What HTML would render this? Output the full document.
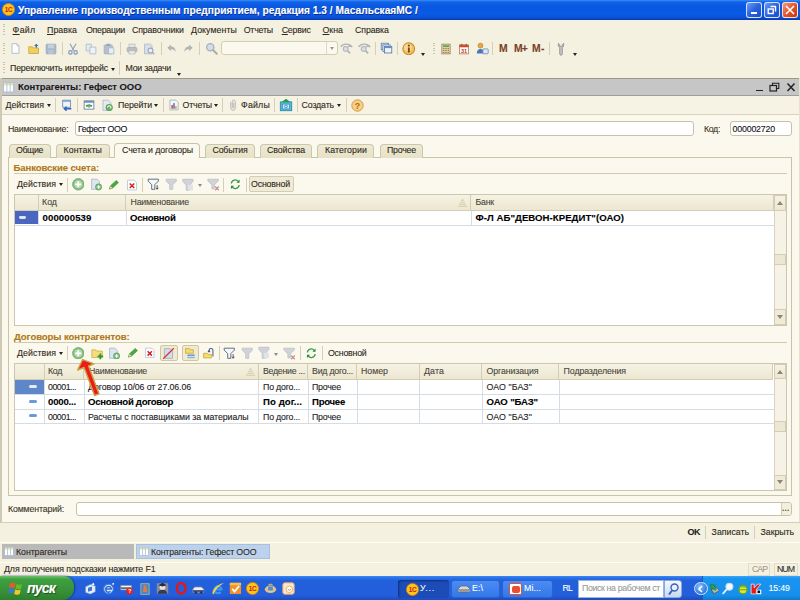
<!DOCTYPE html>
<html lang="ru">
<head>
<meta charset="utf-8">
<title>Контрагенты: Гефест ООО</title>
<style>
*{box-sizing:border-box;margin:0;padding:0}
html,body{width:800px;height:600px;overflow:hidden}
body{position:relative;background:#f5f1e0;font-family:"Liberation Sans",sans-serif;font-size:9px;color:#222}
.a,.t,svg{position:absolute}
.t{white-space:pre;-webkit-text-stroke:0.1px currentColor}
.t u{text-decoration-thickness:0.7px;text-underline-offset:1px}
.sep{position:absolute;width:1px;background:#d4cfb8}
.grip{position:absolute;width:2px;background:repeating-linear-gradient(#c8c3ac 0 1px,transparent 1px 2.4px)}
.inp{position:absolute;background:#fff;border:1px solid #c6c1a8;border-radius:3px}
.tab{position:absolute;top:143.5px;height:14px;background:linear-gradient(#eeead4,#e6e1c6);border:1px solid #cbc6ac;border-bottom:none;border-radius:4px 4px 0 0}
.hd{position:absolute;background:linear-gradient(#f6f3e4,#ece7d0);border-right:1px solid #d2cdb4;border-bottom:1px solid #d2cdb4}
.vl{position:absolute;width:1px;background:#d4dce6}
.hl{position:absolute;height:1px;background:#d4dce6}
.dd{position:absolute;width:0;height:0;border-left:2.7px solid transparent;border-right:2.7px solid transparent;border-top:3.1px solid #1a1a1a}
</style>
</head>
<body>
<div class="a" style="left:0.0px;top:0.0px;width:800.0px;height:19.5px;background:linear-gradient(#3a8cf8 0,#0f63e8 10%,#0a58e0 30%,#0a5ae6 70%,#0a50d6 88%,#0838b0 100%)"></div>
<svg style="left:2.0px;top:2.5px" width="13.0" height="13.0" viewBox="0 0 16 16"><circle cx="8" cy="8" r="7.500" fill="#f8c818" stroke="#e87810" stroke-width="1"/><text x="8" y="11" font-size="8" font-weight="bold" font-family="Liberation Sans,sans-serif" text-anchor="middle" fill="#d01818" letter-spacing="-0.5">1С</text></svg>
<div class="a" style="left:746.0px;top:2.0px;width:16.0px;height:15.5px;border:1px solid rgba(255,255,255,.8);border-radius:3px;background:linear-gradient(135deg,#6a9cf8,#2a62e0 50%,#1c4ec8)"></div>
<div class="a" style="left:764.0px;top:2.0px;width:16.0px;height:15.5px;border:1px solid rgba(255,255,255,.8);border-radius:3px;background:linear-gradient(135deg,#6a9cf8,#2a62e0 50%,#1c4ec8)"></div>
<div class="a" style="left:782.0px;top:2.0px;width:16.0px;height:15.5px;border:1px solid rgba(255,255,255,.8);border-radius:3px;background:linear-gradient(135deg,#f09a80,#e0562e 50%,#c03a14)"></div>
<div class="a" style="left:750.5px;top:11.5px;width:6.0px;height:2.5px;background:#fff"></div>
<svg style="left:767.0px;top:5.0px" width="10.0" height="10.0" viewBox="0 0 10 10"><path d="M3.500 1.500h5v5" fill="none" stroke="#fff" stroke-width="1.400"/><rect x="1.200" y="4" width="5" height="4.500" fill="none" stroke="#fff" stroke-width="1.400"/></svg>
<svg style="left:785.0px;top:4.5px" width="10.0" height="10.0" viewBox="0 0 10 10"><path d="M1 1l8 8M9 1l-8 8" stroke="#fff" stroke-width="1.600"/></svg>
<div class="a" style="left:0.0px;top:19.5px;width:800.0px;height:59.0px;background:#f5f1e0"></div>
<div class="grip" style="left:3px;top:24px;height:11px"></div>
<div class="grip" style="left:3px;top:43px;height:12px"></div>
<div class="grip" style="left:3px;top:62px;height:12px"></div>
<svg style="left:10.0px;top:43.0px" width="11.0" height="11.0" viewBox="0 0 16 16"><path d="M3 1h7l3 3v11H3z" fill="#fff" stroke="#9aa8bc" stroke-width="1"/><path d="M10 1v3h3" fill="#dfe6f0" stroke="#9aa8bc" stroke-width=".8"/></svg>
<svg style="left:28.0px;top:42.5px" width="12.0" height="12.0" viewBox="0 0 16 16"><path d="M1 5h5l1 1.5h7V14H1z" fill="#f2d060" stroke="#c8a030" stroke-width="1"/><path d="M11 1l3 3h-2v2h-2V4H8z" fill="#3a6ab0"/></svg>
<svg style="left:45.0px;top:42.5px" width="12.0" height="12.0" viewBox="0 0 16 16"><rect x="1.5" y="1.5" width="13" height="13" rx="1" fill="#a9b7c9" stroke="#98a8bc"/><rect x="4" y="2" width="8" height="5" fill="#c6d0dc"/><rect x="4.5" y="9.5" width="7" height="5" fill="#b9c5d3"/></svg>
<svg style="left:67.0px;top:42.5px" width="12.0" height="12.0" viewBox="0 0 16 16"><path d="M4 1l5 9M12 1L7 10" stroke="#8fa4c0" stroke-width="1.6" fill="none"/><circle cx="4.5" cy="12.5" r="2.3" fill="none" stroke="#7f97b8" stroke-width="1.5"/><circle cx="11.5" cy="12.5" r="2.3" fill="none" stroke="#7f97b8" stroke-width="1.5"/></svg>
<svg style="left:85.0px;top:42.5px" width="12.0" height="12.0" viewBox="0 0 16 16"><path d="M1.5 1.5h7v9h-7z" fill="#e4eaf2" stroke="#a4b4c8"/><path d="M6.500 5.500h8v9h-8z" fill="#eef2f7" stroke="#a4b4c8"/></svg>
<svg style="left:103.0px;top:42.5px" width="12.0" height="12.0" viewBox="0 0 16 16"><rect x="1.500" y="2.500" width="11" height="12" rx="1" fill="#b4c0d0" stroke="#a0aec2"/><rect x="4.500" y="1" width="5" height="3" fill="#98a8bc"/><rect x="7.500" y="6.500" width="7" height="8" fill="#e8edf4" stroke="#a4b4c8"/></svg>
<svg style="left:126.0px;top:42.5px" width="12.0" height="12.0" viewBox="0 0 16 16"><rect x="4" y="1.500" width="8" height="5" fill="#e6e6e6" stroke="#b8b8b8"/><rect x="1.500" y="6" width="13" height="6" rx="1.500" fill="#bcbcbc" stroke="#ababab"/><rect x="4" y="10.500" width="8" height="4" fill="#eee" stroke="#b8b8b8"/></svg>
<svg style="left:143.0px;top:42.5px" width="12.0" height="12.0" viewBox="0 0 16 16"><path d="M2 1.500h8l2 2v11H2z" fill="#d9dfe8" stroke="#aab4c4"/><circle cx="10" cy="10" r="3.200" fill="#e8eef6" stroke="#9aa8bc" stroke-width="1.400"/><path d="M12.300 12.300l2.700 2.700" stroke="#9aa8bc" stroke-width="1.800"/></svg>
<svg style="left:166.0px;top:43.0px" width="11.0" height="11.0" viewBox="0 0 16 16"><path d="M2 7l5-5v3c4 0 7 2 7 8-1.500-3-3.500-4-7-4v3z" fill="#b4b4b4"/></svg>
<svg style="left:183.0px;top:43.0px" width="11.0" height="11.0" viewBox="0 0 16 16"><path d="M14 7L9 2v3C5 5 2 7 2 13c1.500-3 3.500-4 7-4v3z" fill="#b4b4b4"/></svg>
<svg style="left:205.0px;top:42.0px" width="13.0" height="13.0" viewBox="0 0 16 16"><circle cx="6.500" cy="6.500" r="4.500" fill="#d4dce8" stroke="#a4b0c4" stroke-width="1.600"/><path d="M10 10l4.500 4.500" stroke="#b0a8a0" stroke-width="2.400" stroke-linecap="round"/></svg>
<svg style="left:340.0px;top:42.0px" width="13.0" height="13.0" viewBox="0 0 16 16"><path d="M1 6c2-4 10-5 14 0-3-1.500-4-1.500-5 0" fill="none" stroke="#b2b2b2" stroke-width="1.800"/><circle cx="7" cy="8.500" r="3" fill="#d8dde6" stroke="#b0b4bc" stroke-width="1.300"/><path d="M9.500 11l3 3" stroke="#b0b0b0" stroke-width="2"/></svg>
<svg style="left:358.0px;top:42.0px" width="13.0" height="13.0" viewBox="0 0 16 16"><path d="M1 6c2-4 10-5 14 0-3-1.500-4-1.500-5 0" fill="none" stroke="#b2b2b2" stroke-width="1.800"/><circle cx="7" cy="8.500" r="3" fill="#d8dde6" stroke="#b0b4bc" stroke-width="1.300"/><path d="M9.500 11l3 3" stroke="#b0b0b0" stroke-width="2"/></svg>
<svg style="left:380.0px;top:42.0px" width="13.0" height="13.0" viewBox="0 0 16 16"><rect x="1.500" y="1.500" width="9" height="8" fill="#dfe8f4" stroke="#5f7fae"/><rect x="3.500" y="3.500" width="9" height="8" fill="#dfe8f4" stroke="#5f7fae"/><rect x="5.500" y="5.500" width="9" height="8" fill="#eef3fa" stroke="#4f73a8"/><rect x="5.500" y="5.500" width="9" height="2" fill="#6f8fc0"/></svg>
<svg style="left:402.0px;top:41.8px" width="13.5" height="13.5" viewBox="0 0 16 16"><circle cx="8" cy="8" r="7" fill="#f4c060" stroke="#c88a28" stroke-width="1.200"/><circle cx="7" cy="6.500" r="4.500" fill="#fbe2a8" opacity=".7"/><rect x="7" y="6.500" width="2.200" height="6" fill="#7a4a10"/><circle cx="8.100" cy="4.200" r="1.300" fill="#7a4a10"/></svg>
<svg style="left:440.0px;top:42.5px" width="12.0" height="12.0" viewBox="0 0 16 16"><rect x="2.500" y="1.500" width="11" height="13" fill="#e8dcb8" stroke="#8a7a50"/><rect x="4" y="3" width="8" height="2.500" fill="#6aa04a"/><path d="M4 7.500h8M4 10h8M4 12.500h8" stroke="#a08848" stroke-width="1.500" stroke-dasharray="2 1"/></svg>
<svg style="left:458.0px;top:42.5px" width="12.0" height="12.0" viewBox="0 0 16 16"><rect x="2" y="2.500" width="12" height="12" fill="#fff" stroke="#b07050"/><rect x="2" y="2.500" width="12" height="3.200" fill="#d84828"/><path d="M5 1v3M11 1v3" stroke="#806050" stroke-width="1.300"/><text x="8" y="13.300" font-size="7.500" font-weight="bold" font-family="Liberation Sans,sans-serif" text-anchor="middle" fill="#c03818">31</text></svg>
<svg style="left:476.0px;top:42.0px" width="13.0" height="13.0" viewBox="0 0 16 16"><circle cx="5.500" cy="4.500" r="3" fill="#e8a848" stroke="#b87828" stroke-width=".8"/><path d="M1 14c0-4 2-5.500 4.500-5.500S10 10 10 14z" fill="#4878b8"/><rect x="8.500" y="8.500" width="6.500" height="6" rx="1" fill="#dfe8f4" stroke="#6888b8"/></svg>
<svg style="left:554.0px;top:41.5px" width="14.0" height="14.0" viewBox="0 0 16 16"><path d="M5 1.500v3.500l1.500 1.500v7a1.500 1.500 0 003 0v-7L11 5V1.500L9.500 3v2h-3V3z" fill="#c4c4c4" stroke="#8c8c8c" stroke-width=".9"/></svg>
<div class="sep" style="left:62.0px;top:42.0px;height:13.0px;background:#d4cfb8"></div>
<div class="sep" style="left:120.0px;top:42.0px;height:13.0px;background:#d4cfb8"></div>
<div class="sep" style="left:161.0px;top:42.0px;height:13.0px;background:#d4cfb8"></div>
<div class="sep" style="left:199.0px;top:42.0px;height:13.0px;background:#d4cfb8"></div>
<div class="sep" style="left:375.0px;top:42.0px;height:13.0px;background:#d4cfb8"></div>
<div class="sep" style="left:397.0px;top:42.0px;height:13.0px;background:#d4cfb8"></div>
<div class="sep" style="left:492.0px;top:42.0px;height:13.0px;background:#d4cfb8"></div>
<div class="sep" style="left:549.0px;top:42.0px;height:13.0px;background:#d4cfb8"></div>
<div class="grip" style="left:432.5px;top:43px;height:12px"></div>
<div class="a" style="left:220.5px;top:40.8px;width:117.5px;height:14.4px;background:#fbf9ee;border:1px solid #d2cdb6;border-radius:3px"></div>
<div class="sep" style="left:326.0px;top:42.0px;height:12.0px;background:#ddd8c4"></div>
<div class="dd" style="left:329.5px;top:47.0px;border-top-color:#9a968a"></div>
<div class="dd" style="left:420.5px;top:52.5px;border-top-color:#222"></div>
<div class="dd" style="left:572.5px;top:52.5px;border-top-color:#222"></div>
<div class="dd" style="left:111.0px;top:67.5px;border-top-color:#222"></div>
<div class="sep" style="left:119.0px;top:61.0px;height:14.0px;background:#d4cfb8"></div>
<div class="dd" style="left:177.3px;top:72.5px;border-top-color:#222"></div>
<div class="a" style="left:0.0px;top:78.3px;width:798.5px;height:17.7px;background:#c6c6c6;border-top:1.5px solid #9c9886;border-bottom:1.2px solid #9e9e9a"></div>
<svg style="left:3.0px;top:81.5px" width="11.0" height="11.0" viewBox="0 0 16 16"><rect x="1" y="1.500" width="14" height="13" fill="#fff" stroke="#a4b4d0"/><rect x="1.500" y="2" width="13" height="3" fill="#e4e8a4"/><path d="M5.700 1.500v13M10.300 1.500v13" stroke="#a4b8d8" stroke-width="1.200"/></svg>
<div class="a" style="left:756.0px;top:89.5px;width:7.0px;height:1.7px;background:#222"></div>
<svg style="left:769.0px;top:82.0px" width="11.0" height="10.0" viewBox="0 0 11 10"><path d="M3.500 3V1.200h6.300v5.300H8" fill="none" stroke="#222" stroke-width="1.100"/><rect x="1" y="3.500" width="6.500" height="5.500" fill="none" stroke="#222" stroke-width="1.200"/></svg>
<svg style="left:786.0px;top:82.0px" width="10.0" height="10.0" viewBox="0 0 10 10"><path d="M1.500 1.500l7 7.500M8.500 1.500l-7 7.500" stroke="#222" stroke-width="1.500"/></svg>
<div class="a" style="left:0.0px;top:96.0px;width:800.0px;height:18.5px;background:#f6f3e4;border-bottom:1px solid #d8d3bc"></div>
<div class="a" style="left:0.0px;top:114.5px;width:800.0px;height:407.5px;background:#fbf9ed"></div>
<div class="dd" style="left:46.5px;top:103.5px;border-top-color:#222"></div>
<div class="sep" style="left:55.0px;top:98.0px;height:14.0px;background:#d4cfb8"></div>
<svg style="left:60.0px;top:98.5px" width="12.5" height="12.5" viewBox="0 0 16 16"><rect x="3.500" y="1.500" width="10" height="9" fill="#eef3fa" stroke="#5f7fae"/><rect x="3.500" y="1.500" width="10" height="2" fill="#7f9fd0"/><path d="M14.500 12.500H6M8.500 10l-3 2.500 3 2.500" stroke="#2f68b8" stroke-width="1.800" fill="none"/></svg>
<div class="sep" style="left:76.5px;top:98.0px;height:14.0px;background:#d4cfb8"></div>
<svg style="left:82.5px;top:99.0px" width="12.0" height="12.0" viewBox="0 0 16 16"><rect x="1.500" y="2.500" width="13" height="11" fill="#fff" stroke="#4f6f9e"/><rect x="1.500" y="2.500" width="13" height="2.500" fill="#6f8fc0"/><path d="M4 9h8M8 6.500v5" stroke="#4a9a4a" stroke-width="1.600"/><path d="M3.500 9l2.500-2v4zM12.500 9L10 7v4z" fill="#3a8a3a"/></svg>
<svg style="left:100.5px;top:98.5px" width="12.5" height="12.5" viewBox="0 0 16 16"><path d="M2.500 1.500h7l3 3v10h-10z" fill="#e4eaf2" stroke="#a4b4c8"/><circle cx="10.500" cy="11" r="4.200" fill="#6ab06a" stroke="#4a904a" stroke-width=".8"/><path d="M8.300 11a2.200 2.200 0 114 1.200" stroke="#fff" stroke-width="1.300" fill="none"/></svg>
<div class="dd" style="left:154.0px;top:103.5px;border-top-color:#222"></div>
<div class="sep" style="left:163.0px;top:98.0px;height:14.0px;background:#d4cfb8"></div>
<svg style="left:168.0px;top:98.5px" width="12.0" height="12.0" viewBox="0 0 16 16"><path d="M2.500 1.500h8l3 3v10h-11z" fill="#f4f6fa" stroke="#9aa8bc"/><rect x="4.500" y="8" width="2" height="5" fill="#d84828"/><rect x="7" y="5.500" width="2" height="7.500" fill="#4878c8"/><rect x="9.500" y="9.500" width="2" height="3.500" fill="#e8a020"/></svg>
<div class="dd" style="left:214.0px;top:103.5px;border-top-color:#222"></div>
<div class="sep" style="left:222.0px;top:98.0px;height:14.0px;background:#d4cfb8"></div>
<svg style="left:226.5px;top:98.5px" width="12.0" height="12.0" viewBox="0 0 16 16"><path d="M5 4v8a3 3 0 006 0V3.500a2 2 0 00-4 0V11a1 1 0 002 0V5" fill="none" stroke="#b4b4b4" stroke-width="1.300"/></svg>
<div class="sep" style="left:274.0px;top:98.0px;height:14.0px;background:#d4cfb8"></div>
<svg style="left:279.0px;top:98.0px" width="14.0" height="14.0" viewBox="0 0 16 16"><rect x="1.500" y="4.500" width="13" height="10" fill="#58b8d8" stroke="#2888b0"/><path d="M3 4.500L8 .8l5 3.700z" fill="#2a9a4a"/><rect x="4" y="7" width="8" height="5.500" fill="#c8ecf8" stroke="#2888b0" stroke-width=".7"/><circle cx="8" cy="9.700" r="1.600" fill="none" stroke="#2888b0" stroke-width=".9"/></svg>
<div class="sep" style="left:296.5px;top:98.0px;height:14.0px;background:#d4cfb8"></div>
<div class="dd" style="left:337.0px;top:103.5px;border-top-color:#222"></div>
<div class="sep" style="left:345.5px;top:98.0px;height:14.0px;background:#d4cfb8"></div>
<svg style="left:350.5px;top:98.5px" width="13.0" height="13.0" viewBox="0 0 16 16"><circle cx="8" cy="8" r="7" fill="#f6d088" stroke="#d89838" stroke-width="1.200"/><text x="8" y="12" font-size="11" font-weight="bold" font-family="Liberation Sans,sans-serif" text-anchor="middle" fill="#b86818">?</text></svg>
<div class="a" style="left:0.0px;top:78.3px;width:2.0px;height:463.2px;background:#cdc9b4"></div>
<div class="a" style="left:798.5px;top:78.3px;width:1.5px;height:463.2px;background:#e6e2ce"></div>
<div class="inp" style="left:75.0px;top:121.0px;width:619.0px;height:14.8px;"></div>
<div class="inp" style="left:729.5px;top:121.0px;width:62.5px;height:14.8px;"></div>
<div class="a" style="left:7.5px;top:157.0px;width:784.5px;height:339.0px;border:1px solid #c9c4a8;background:#fbf9ed"></div>
<div class="tab" style="left:8.5px;top:143.5px;width:42.5px;height:14.0px;"></div>
<div class="tab" style="left:55.5px;top:143.5px;width:54.5px;height:14.0px;"></div>
<div class="tab" style="left:204.5px;top:143.5px;width:50.5px;height:14.0px;"></div>
<div class="tab" style="left:260.0px;top:143.5px;width:52.0px;height:14.0px;"></div>
<div class="tab" style="left:317.0px;top:143.5px;width:57.0px;height:14.0px;"></div>
<div class="tab" style="left:379.5px;top:143.5px;width:43.5px;height:14.0px;"></div>
<div class="a" style="left:113.5px;top:142.5px;width:86.0px;height:15.7px;background:#fbf9ed;border:1px solid #c9c4a8;border-bottom:none;border-radius:4px 4px 0 0"></div>
<div class="a" style="left:13.5px;top:173.2px;width:773.5px;height:1.0px;background:#cfcab0"></div>
<div class="dd" style="left:58.5px;top:183.0px;border-top-color:#222"></div>
<div class="sep" style="left:67.0px;top:177.5px;height:14.0px;background:#d4cfb8"></div>
<svg style="left:71.7px;top:178.2px" width="12.6" height="12.6" viewBox="0 0 16 16"><circle cx="8" cy="8" r="7.300" fill="#84bc84" stroke="#6aa86a" stroke-width="1"/><circle cx="8" cy="8" r="5" fill="#b4d8ac"/><path d="M8 4.200v7.600M4.200 8h7.600" stroke="#fff" stroke-width="2.200"/></svg>
<svg style="left:90.0px;top:178.2px" width="12.5" height="12.5" viewBox="0 0 16 16"><path d="M2 1.500h7l3 3v10H2z" fill="#dde5ef" stroke="#a4b4c8"/><circle cx="11" cy="11.500" r="4" fill="#7ab87a" stroke="#5a9c5a" stroke-width=".8"/><path d="M11 9.200v4.600M8.700 11.500h4.600" stroke="#fff" stroke-width="1.500"/></svg>
<svg style="left:108.0px;top:178.8px" width="11.5" height="11.5" viewBox="0 0 16 16"><path d="M2 14l1.500-4.500 8-7.500 3 3-8 7.500z" fill="#4aaa3a" stroke="#2a8a2a" stroke-width=".8"/><path d="M2 14l1.500-4.500 3 3z" fill="#f4e4b0" stroke="#8a8a5a" stroke-width=".5"/></svg>
<svg style="left:126.0px;top:178.5px" width="12.0" height="12.0" viewBox="0 0 16 16"><path d="M2 1.500h9l3 3v10H2z" fill="#fff" stroke="#a8c0dc"/><path d="M5 6l6 6M11 6l-6 6" stroke="#d82020" stroke-width="2"/></svg>
<svg style="left:147.0px;top:178.2px" width="12.5" height="12.5" viewBox="0 0 16 16"><path d="M1.500 1.500h13v2.500l-4.500 4.500v6h-4v-6L1.500 4z" fill="#f4f8fc" stroke="#4a5a6a" stroke-width="1.100"/><path d="M13 9v5M11.500 12.500l1.500 2 1.500-2" stroke="#333" stroke-width="1" fill="none"/></svg>
<svg style="left:165.0px;top:178.2px" width="12.5" height="12.5" viewBox="0 0 16 16"><path d="M1.500 1.500h13v2.500l-4.500 4.500v6h-4v-6L1.500 4z" fill="#d0d4d8" stroke="#bcc0c6" stroke-width="1"/></svg>
<svg style="left:182.0px;top:177.8px" width="13.5" height="13.5" viewBox="0 0 16 16"><path d="M1 1.500h12v2.500l-4 4.500v6h-4v-6L1 4z" fill="#d0d4d8" stroke="#bcc0c6" stroke-width="1"/><rect x="7" y="8" width="6" height="6.500" fill="#dfe2e6"/></svg>
<svg style="left:207.0px;top:178.0px" width="13.0" height="13.0" viewBox="0 0 16 16"><path d="M1 1.500h13v2l-5 5v5h-3v-5l-5-5z" fill="#d0d4d8" stroke="#bcc0c6" stroke-width="1"/><path d="M10 10.500l4.500 4.500M14.500 10.500L10 15" stroke="#c89090" stroke-width="1.600"/></svg>
<svg style="left:229.0px;top:178.2px" width="12.5" height="12.5" viewBox="0 0 16 16"><path d="M3 7a5 5 0 019-2.500" fill="none" stroke="#3a9a4a" stroke-width="1.600"/><path d="M13.500 2v4H9.500z" fill="#2a8a3a"/><path d="M13 9a5 5 0 01-9 2.500" fill="none" stroke="#3a9a4a" stroke-width="1.600"/><path d="M2.500 14V10h4z" fill="#2a8a3a"/></svg>
<div class="dd" style="left:197.5px;top:184.0px;border-top-color:#8a8a8a"></div>
<div class="sep" style="left:142.0px;top:177.5px;height:14.0px;background:#d4cfb8"></div>
<div class="sep" style="left:223.0px;top:177.5px;height:14.0px;background:#d4cfb8"></div>
<div class="sep" style="left:246.0px;top:177.5px;height:14.0px;background:#d4cfb8"></div>
<div class="a" style="left:248.5px;top:176.2px;width:45.0px;height:16.1px;background:#efebd6;border:1px solid #d2cdb4;border-radius:2px"></div>
<div class="a" style="left:13.5px;top:194.0px;width:773.5px;height:131.5px;background:#fff;border:1px solid #cbc6ae"></div>
<div class="hd" style="left:14.5px;top:195.0px;width:24.0px;height:16.0px;"></div>
<div class="hd" style="left:38.5px;top:195.0px;width:87.5px;height:16.0px;"></div>
<div class="hd" style="left:126.0px;top:195.0px;width:345.0px;height:16.0px;"></div>
<div class="hd" style="left:471.0px;top:195.0px;width:302.5px;height:16.0px;"></div>
<svg style="left:456.5px;top:197.0px" width="11.0" height="11.0" viewBox="0 0 16 16"><path d="M8 2.500l2.200 2.800H5.800z" fill="#cfc8a8"/><path d="M4.500 7.700h7" stroke="#cfc8a8" stroke-width="1.300"/><path d="M3 10.600h10" stroke="#cfc8a8" stroke-width="1.300"/><path d="M1.500 13.500h13" stroke="#cfc8a8" stroke-width="1.300"/></svg>
<div class="a" style="left:14.5px;top:211.0px;width:24.0px;height:13.2px;background:#4a66c0"></div>
<div class="a" style="left:19.3px;top:216.3px;width:6.7px;height:2.9px;background:#dfe6f8;border-radius:1.4px"></div>
<div class="hl" style="left:14.5px;top:224.5px;width:759.0px;height:1.0px;"></div>
<div class="vl" style="left:38.0px;top:211.0px;width:1.0px;height:13.5px;"></div>
<div class="vl" style="left:125.5px;top:211.0px;width:1.0px;height:13.5px;"></div>
<div class="vl" style="left:470.5px;top:211.0px;width:1.0px;height:13.5px;"></div>
<div class="a" style="left:773.5px;top:195.0px;width:12.5px;height:129.5px;background:#f6f3e6;border-left:1px solid #d8d3bc"></div><div class="a" style="left:773.5px;top:195.0px;width:12.5px;height:15.5px;background:linear-gradient(#f6f3e4,#ece7d0);border:1px solid #d2cdb4"></div><div class="a" style="left:773.5px;top:309.0px;width:12.5px;height:15.5px;background:#efebd8;border:1px solid #d2cdb4"></div><div class="a" style="left:773.5px;top:254.2px;width:12.5px;height:11.0px;background:#ece7d2;border:1px solid #d2cdb4"></div><div class="dd" style="left:776.8px;top:201.0px;border-top:none;border-bottom:4px solid #8a8678;border-left-width:3px;border-right-width:3px"></div><div class="dd" style="left:776.8px;top:314.5px;border-top:4px solid #8a8678;border-left-width:3px;border-right-width:3px"></div>
<div class="a" style="left:13.5px;top:342.0px;width:773.5px;height:1.0px;background:#cfcab0"></div>
<div class="dd" style="left:58.5px;top:351.8px;border-top-color:#222"></div>
<div class="sep" style="left:67.0px;top:346.0px;height:14.0px;background:#d4cfb8"></div>
<div class="a" style="left:159.5px;top:344.5px;width:18.0px;height:16.5px;background:#f2ead0;border:1px solid #cfc6a4;border-radius:2px"></div>
<div class="a" style="left:181.5px;top:344.5px;width:17.0px;height:16.5px;background:#f2ead0;border:1px solid #cfc6a4;border-radius:2px"></div>
<svg style="left:71.7px;top:346.9px" width="12.6" height="12.6" viewBox="0 0 16 16"><circle cx="8" cy="8" r="7.300" fill="#84bc84" stroke="#6aa86a" stroke-width="1"/><circle cx="8" cy="8" r="5" fill="#b4d8ac"/><path d="M8 4.200v7.600M4.200 8h7.600" stroke="#fff" stroke-width="2.200"/></svg>
<svg style="left:90.5px;top:346.7px" width="13.0" height="13.0" viewBox="0 0 16 16"><path d="M1 3.500h5l1 1.500h7V13H1z" fill="#f4dc80" stroke="#d0b048" stroke-width="1"/><path d="M11.500 8v7M8 11.500h7" stroke="#2a9a2a" stroke-width="2.200"/></svg>
<svg style="left:108.0px;top:346.9px" width="12.5" height="12.5" viewBox="0 0 16 16"><path d="M2 1.500h7l3 3v10H2z" fill="#dde5ef" stroke="#a4b4c8"/><circle cx="11" cy="11.500" r="4" fill="#7ab87a" stroke="#5a9c5a" stroke-width=".8"/><path d="M11 9.200v4.600M8.700 11.500h4.600" stroke="#fff" stroke-width="1.500"/></svg>
<svg style="left:126.5px;top:347.4px" width="11.5" height="11.5" viewBox="0 0 16 16"><path d="M2 14l1.500-4.500 8-7.500 3 3-8 7.500z" fill="#4aaa3a" stroke="#2a8a2a" stroke-width=".8"/><path d="M2 14l1.500-4.500 3 3z" fill="#f4e4b0" stroke="#8a8a5a" stroke-width=".5"/></svg>
<svg style="left:143.5px;top:347.4px" width="11.5" height="11.5" viewBox="0 0 16 16"><path d="M2 1.500h9l3 3v10H2z" fill="#fff" stroke="#a8c0dc"/><path d="M5 6l6 6M11 6l-6 6" stroke="#d82020" stroke-width="2"/></svg>
<svg style="left:162.0px;top:346.7px" width="13.0" height="13.0" viewBox="0 0 16 16"><path d="M3 2h7l3 3v9H3z" fill="#d4dcec" stroke="#9aaac8"/><path d="M1.500 14.500l13-13" stroke="#d83030" stroke-width="1.500"/></svg>
<svg style="left:184.0px;top:346.9px" width="12.5" height="12.5" viewBox="0 0 16 16"><path d="M2 2h5l1 1.500h4V8H2z" fill="#f4dc70" stroke="#c8a838"/><rect x="4" y="9.500" width="10" height="2" rx="1" fill="#6a9ad8"/><rect x="4" y="12.500" width="10" height="2" rx="1" fill="#8ab4e8"/></svg>
<svg style="left:202.0px;top:346.9px" width="12.5" height="12.5" viewBox="0 0 16 16"><path d="M2 8h5l1 1.500h4V14H2z" fill="#f4dc70" stroke="#c8a838"/><path d="M9 7V4.500a2.500 2.500 0 015 0V12" fill="none" stroke="#4a5a7a" stroke-width="1.300"/><path d="M7 6.500l2-3 2 3z" fill="#4a5a7a"/></svg>
<svg style="left:223.0px;top:346.9px" width="12.5" height="12.5" viewBox="0 0 16 16"><path d="M1.500 1.500h13v2.500l-4.500 4.500v6h-4v-6L1.500 4z" fill="#f4f8fc" stroke="#4a5a6a" stroke-width="1.100"/><path d="M13 9v5M11.500 12.500l1.500 2 1.500-2" stroke="#333" stroke-width="1" fill="none"/></svg>
<svg style="left:241.0px;top:346.9px" width="12.5" height="12.5" viewBox="0 0 16 16"><path d="M1.500 1.500h13v2.500l-4.500 4.500v6h-4v-6L1.500 4z" fill="#d0d4d8" stroke="#bcc0c6" stroke-width="1"/></svg>
<svg style="left:258.0px;top:346.4px" width="13.5" height="13.5" viewBox="0 0 16 16"><path d="M1 1.500h12v2.500l-4 4.500v6h-4v-6L1 4z" fill="#d0d4d8" stroke="#bcc0c6" stroke-width="1"/><rect x="7" y="8" width="6" height="6.500" fill="#dfe2e6"/></svg>
<svg style="left:283.0px;top:346.7px" width="13.0" height="13.0" viewBox="0 0 16 16"><path d="M1 1.500h13v2l-5 5v5h-3v-5l-5-5z" fill="#d0d4d8" stroke="#bcc0c6" stroke-width="1"/><path d="M10 10.500l4.500 4.500M14.500 10.500L10 15" stroke="#c89090" stroke-width="1.600"/></svg>
<svg style="left:305.0px;top:346.9px" width="12.5" height="12.5" viewBox="0 0 16 16"><path d="M3 7a5 5 0 019-2.500" fill="none" stroke="#3a9a4a" stroke-width="1.600"/><path d="M13.500 2v4H9.500z" fill="#2a8a3a"/><path d="M13 9a5 5 0 01-9 2.500" fill="none" stroke="#3a9a4a" stroke-width="1.600"/><path d="M2.500 14V10h4z" fill="#2a8a3a"/></svg>
<div class="dd" style="left:273.5px;top:352.5px;border-top-color:#8a8a8a"></div>
<div class="sep" style="left:219.0px;top:346.0px;height:14.0px;background:#d4cfb8"></div>
<div class="sep" style="left:300.0px;top:346.0px;height:14.0px;background:#d4cfb8"></div>
<div class="sep" style="left:322.0px;top:346.0px;height:14.0px;background:#d4cfb8"></div>
<div class="a" style="left:13.5px;top:362.5px;width:773.5px;height:128.5px;background:#fff;border:1px solid #cbc6ae"></div>
<div class="hd" style="left:14.5px;top:363.5px;width:30.0px;height:16.0px;"></div>
<div class="hd" style="left:44.5px;top:363.5px;width:39.5px;height:16.0px;"></div>
<div class="hd" style="left:84.0px;top:363.5px;width:174.6px;height:16.0px;"></div>
<div class="hd" style="left:258.6px;top:363.5px;width:49.4px;height:16.0px;"></div>
<div class="hd" style="left:308.0px;top:363.5px;width:49.0px;height:16.0px;"></div>
<div class="hd" style="left:357.0px;top:363.5px;width:62.6px;height:16.0px;"></div>
<div class="hd" style="left:419.6px;top:363.5px;width:62.8px;height:16.0px;"></div>
<div class="hd" style="left:482.4px;top:363.5px;width:77.0px;height:16.0px;"></div>
<div class="hd" style="left:559.4px;top:363.5px;width:214.1px;height:16.0px;"></div>
<svg style="left:244.5px;top:366.0px" width="11.0" height="11.0" viewBox="0 0 16 16"><path d="M8 2.500l2.200 2.800H5.800z" fill="#cfc8a8"/><path d="M4.500 7.700h7" stroke="#cfc8a8" stroke-width="1.300"/><path d="M3 10.600h10" stroke="#cfc8a8" stroke-width="1.300"/><path d="M1.500 13.500h13" stroke="#cfc8a8" stroke-width="1.300"/></svg>
<div class="a" style="left:14.5px;top:379.5px;width:30.0px;height:14.8px;background:#5f86c8"></div>
<div class="a" style="left:28.7px;top:384.8px;width:8.3px;height:3.0px;background:#e4ecfa;border-radius:1.500px"></div>
<div class="a" style="left:28.7px;top:399.7px;width:8.3px;height:3.0px;background:#6a98d8;border-radius:1.500px"></div>
<div class="a" style="left:28.7px;top:414.1px;width:8.3px;height:3.0px;background:#6a98d8;border-radius:1.500px"></div>
<div class="hl" style="left:14.5px;top:394.2px;width:759.0px;height:1.0px;"></div>
<div class="hl" style="left:14.5px;top:408.7px;width:759.0px;height:1.0px;"></div>
<div class="hl" style="left:14.5px;top:423.2px;width:759.0px;height:1.0px;"></div>
<div class="vl" style="left:44.0px;top:379.5px;width:1.0px;height:43.7px;"></div>
<div class="vl" style="left:83.5px;top:379.5px;width:1.0px;height:43.7px;"></div>
<div class="vl" style="left:258.1px;top:379.5px;width:1.0px;height:43.7px;"></div>
<div class="vl" style="left:307.5px;top:379.5px;width:1.0px;height:43.7px;"></div>
<div class="vl" style="left:356.5px;top:379.5px;width:1.0px;height:43.7px;"></div>
<div class="vl" style="left:419.1px;top:379.5px;width:1.0px;height:43.7px;"></div>
<div class="vl" style="left:481.9px;top:379.5px;width:1.0px;height:43.7px;"></div>
<div class="vl" style="left:558.9px;top:379.5px;width:1.0px;height:43.7px;"></div>
<div class="a" style="left:773.5px;top:363.5px;width:12.5px;height:126.5px;background:#f6f3e6;border-left:1px solid #d8d3bc"></div><div class="a" style="left:773.5px;top:363.5px;width:12.5px;height:15.5px;background:linear-gradient(#f6f3e4,#ece7d0);border:1px solid #d2cdb4"></div><div class="a" style="left:773.5px;top:474.5px;width:12.5px;height:15.5px;background:#efebd8;border:1px solid #d2cdb4"></div><div class="a" style="left:773.5px;top:421.2px;width:12.5px;height:11.0px;background:#ece7d2;border:1px solid #d2cdb4"></div><div class="dd" style="left:776.8px;top:369.5px;border-top:none;border-bottom:4px solid #8a8678;border-left-width:3px;border-right-width:3px"></div><div class="dd" style="left:776.8px;top:480.0px;border-top:4px solid #8a8678;border-left-width:3px;border-right-width:3px"></div>
<svg style="left:70px;top:354px;z-index:5" width="40" height="48" viewBox="70 354 40 48"><path d="M82.600 359.600L77.600 370l6.500-2.500L94.600 395.500l4.400-1.700L88.500 366l5.500-2.200z" fill="#f01818" stroke="#c8a244" stroke-width="1.400" stroke-linejoin="round"/></svg>
<div class="inp" style="left:75.5px;top:501.5px;width:716.5px;height:14.3px;"></div>
<div class="a" style="left:780.5px;top:502.5px;width:10.5px;height:12.3px;background:#f3efdc;border-left:1px solid #d2cdb4;border-radius:0 2px 2px 0"></div>
<div class="t" style="left:782px;top:505px;font-size:8px;line-height:8px;letter-spacing:0.3px;color:#555;font-weight:bold">...</div>
<div class="a" style="left:0.0px;top:521.5px;width:800.0px;height:20.5px;background:#f5f1e0;border-top:1px solid #d4cfb8"></div>
<div class="sep" style="left:705.0px;top:526.0px;height:13.0px;background:#d4cfb8"></div>
<div class="sep" style="left:754.0px;top:526.0px;height:13.0px;background:#d4cfb8"></div>
<div class="a" style="left:0.0px;top:541.5px;width:800.0px;height:20.5px;background:#f5f1e0;border-top:1px solid #fffdf4"></div>
<div class="a" style="left:2.0px;top:544.3px;width:132.0px;height:14.5px;background:#b9b9b9"></div>
<div class="a" style="left:136.0px;top:544.3px;width:134.0px;height:14.5px;background:#bcd2ec;border:1px solid #a8c0dc"></div>
<svg style="left:3.5px;top:546.0px" width="10.0" height="11.0" viewBox="0 0 16 16"><rect x="1" y="1.500" width="14" height="13" fill="#fff" stroke="#a4b4d0"/><rect x="1.500" y="2" width="13" height="3" fill="#e4e8a4"/><path d="M5.700 1.500v13M10.300 1.500v13" stroke="#a4b8d8" stroke-width="1.200"/></svg>
<svg style="left:138.5px;top:546.0px" width="10.0" height="11.0" viewBox="0 0 16 16"><rect x="1" y="1.500" width="14" height="13" fill="#fff" stroke="#a4b4d0"/><rect x="1.500" y="2" width="13" height="3" fill="#e4e8a4"/><path d="M5.700 1.500v13M10.300 1.500v13" stroke="#a4b8d8" stroke-width="1.200"/></svg>
<div class="a" style="left:0.0px;top:561.5px;width:800.0px;height:15.0px;background:#f5f1e0;border-top:1px solid #fffdf4"></div>
<div class="a" style="left:747.5px;top:562.5px;width:22.5px;height:13.0px;border:1px solid #e0dcc8"></div>
<div class="a" style="left:773.5px;top:562.5px;width:24.5px;height:13.0px;border:1px solid #e0dcc8"></div>
<div class="a" style="left:0.0px;top:576.3px;width:800.0px;height:23.7px;background:linear-gradient(#3a8af4 0,#2a70ea 8%,#2260da 20%,#245edc 80%,#1d4cbc 100%)"></div>
<div class="a" style="left:0.0px;top:576.3px;width:74.0px;height:23.7px;border-radius:0 10px 12px 0;background:linear-gradient(#6cc06c 0,#3fa03f 14%,#368e36 70%,#2e7e2e 100%);box-shadow:1px 0 2px #143c8c"></div>
<svg style="left:8.0px;top:580.0px" width="16.0" height="16.0" viewBox="0 0 16 16"><path d="M2 3.500q3-1.500 5.500 0l-1 4.500q-2.500-1.500-5.500 0z" fill="#e85a28"/><path d="M8.500 4q3 1.500 5.500 0l-1 4.500q-2.500 1.500-5.500 0z" fill="#6ab82a"/><path d="M.700 9q3-1.500 5.500 0l-1 4.500q-2.500-1.500-5.500 0z" fill="#3a78d8"/><path d="M7.200 9.500q3 1.500 5.500 0l-1 4.500q-2.500 1.500-5.500 0z" fill="#f4c828"/></svg>
<svg style="left:84.4px;top:582.0px" width="12.9" height="12.9" viewBox="0 0 16 16"><path d="M2 6l6-3 6 2v7l-6 3-6-2z" fill="#e8f0fc" stroke="#7a9ad0" stroke-width=".8"/><path d="M5 7l5-1.500v5L5 12z" fill="#3a78d8"/><path d="M9 3l3-2 1 3z" fill="#fff"/></svg>
<svg style="left:102.0px;top:582.0px" width="13.0" height="13.0" viewBox="0 0 16 16"><circle cx="8" cy="8.500" r="6" fill="#dceaf8" stroke="#3a7ae0" stroke-width="1.500"/><path d="M4.500 8.500h7a3.500 3.500 0 10-1 3" fill="none" stroke="#2a6ad8" stroke-width="1.800"/><path d="M12 2l3-1-1 3z" fill="#fff"/></svg>
<svg style="left:120.0px;top:581.5px" width="14.0" height="14.0" viewBox="0 0 16 16"><rect x="1" y="4" width="12" height="5" fill="#f4f4f4" stroke="#9a9a9a" stroke-width=".7"/><rect x="1" y="6" width="12" height="2" fill="#6a6a6a"/><circle cx="11" cy="10.500" r="3.800" fill="#e82020"/><text x="11" y="13" font-size="6.500" font-weight="bold" font-family="Liberation Sans,sans-serif" text-anchor="middle" fill="#fff">?</text></svg>
<svg style="left:139.0px;top:582.5px" width="12.0" height="12.0" viewBox="0 0 16 16"><rect x="2.500" y="1" width="11" height="14" fill="#3a88d8" stroke="#d8c070" stroke-width="1"/><path d="M8 3c2 0 2.500 2 2 4l1 5H5l1-5c-.500-2 0-4 2-4z" fill="#e87838"/></svg>
<svg style="left:156.0px;top:582.0px" width="13.0" height="13.0" viewBox="0 0 16 16"><rect x="1" y="1.500" width="14" height="13" fill="#8a8a9a"/><circle cx="8" cy="6.500" r="3.500" fill="#e4e4e4"/><path d="M2 14.500c1-4 3-5 6-5s5 1 6 5z" fill="#3a3a4a"/><path d="M3 4l5-3 5 3-5 1.500z" fill="#2a2a3a"/></svg>
<svg style="left:175.0px;top:582.2px" width="12.5" height="12.5" viewBox="0 0 16 16"><ellipse cx="8" cy="8" rx="5.500" ry="6.800" fill="none" stroke="#e01818" stroke-width="3.200"/></svg>
<svg style="left:192.0px;top:581.8px" width="13.5" height="13.5" viewBox="0 0 16 16"><path d="M1 9l2-3h8l3 2.500V12H1z" fill="#f0f0f4" stroke="#8a8a9a" stroke-width=".8"/><rect x="1" y="9.500" width="13" height="2.500" fill="#4a5a8a"/><circle cx="4.500" cy="12.500" r="1.500" fill="#333"/><circle cx="11" cy="12.500" r="1.500" fill="#333"/></svg>
<svg style="left:210.5px;top:581.5px" width="14.0" height="14.0" viewBox="0 0 16 16"><path d="M4 8.500h8a4 4 0 10-1 3" fill="none" stroke="#3a98f0" stroke-width="2.400"/><path d="M1.500 13C2 7 9 2 14.500 1.500 10 4 4 9 3.500 14z" fill="#f4d048"/></svg>
<svg style="left:228.7px;top:582.0px" width="12.9" height="12.9" viewBox="0 0 16 16"><rect x="1" y="1" width="14" height="14" rx="1.500" fill="#f49028"/><rect x="1" y="1" width="14" height="3" fill="#f8c058"/><path d="M4 8.500l3 3.500 5.500-7" fill="none" stroke="#fff" stroke-width="2.200"/></svg>
<svg style="left:246.0px;top:582.0px" width="13.0" height="13.0" viewBox="0 0 16 16"><circle cx="8" cy="8" r="7.500" fill="#f8c818" stroke="#e87810" stroke-width="1"/><text x="8" y="11" font-size="8" font-weight="bold" font-family="Liberation Sans,sans-serif" text-anchor="middle" fill="#d01818" letter-spacing="-0.5">1С</text></svg>
<svg style="left:264.0px;top:582.0px" width="13.0" height="13.0" viewBox="0 0 16 16"><ellipse cx="8" cy="9" rx="7" ry="4.500" fill="#e8c070"/><rect x="4.500" y="5" width="7" height="6" rx="1" fill="#5a88c8" stroke="#e8e0c8" stroke-width=".8"/><path d="M5 4h6l-1-2H6z" fill="#d8a848"/></svg>
<svg style="left:282.0px;top:582.0px" width="13.0" height="13.0" viewBox="0 0 16 16"><rect x="1" y="1" width="14" height="14" rx="2.500" fill="#f8e8d0" stroke="#e8a868" stroke-width="1.200"/><circle cx="9" cy="9" r="4" fill="#fff" stroke="#e8a040" stroke-width="1"/><path d="M7 8.500l2 2 2-2" stroke="#d88828" stroke-width="1.200" fill="none"/></svg>
<div class="a" style="left:397.5px;top:579.5px;width:51.0px;height:18.5px;background:#1c4cb8;border-radius:3px;box-shadow:inset 1px 1px 2px #10307c"></div>
<div class="a" style="left:450.5px;top:579.5px;width:49.5px;height:18.5px;background:linear-gradient(#4a8cf4,#3478e8);border-radius:3px;border:1px solid #2a62d0"></div>
<div class="a" style="left:502.0px;top:579.5px;width:50.7px;height:18.5px;background:linear-gradient(#4a8cf4,#3478e8);border-radius:3px;border:1px solid #2a62d0"></div>
<svg style="left:405.5px;top:582.5px" width="13.0" height="13.0" viewBox="0 0 16 16"><circle cx="8" cy="8" r="7.500" fill="#f8c818" stroke="#e87810" stroke-width="1"/><text x="8" y="11" font-size="8" font-weight="bold" font-family="Liberation Sans,sans-serif" text-anchor="middle" fill="#d01818" letter-spacing="-0.5">1С</text></svg>
<svg style="left:457.0px;top:584.0px" width="13.0" height="10.0" viewBox="0 0 13 10"><path d="M1 5l3-3h6l3 3v3H1z" fill="#d8d8d8" stroke="#666" stroke-width=".8"/><rect x="1" y="5" width="12" height="3" fill="#9a9a9a"/></svg>
<div class="a" style="left:509.0px;top:582.5px;width:12.5px;height:12.5px;background:#fff;border:1.500px solid #e85030;border-radius:2px"></div>
<div class="a" style="left:512.0px;top:586.0px;width:7.5px;height:6.5px;background:#e85030;border-radius:2px"></div>
<div class="a" style="left:578.0px;top:580.0px;width:86.0px;height:17.5px;background:#fff;border:1px solid #9ab4dc"></div>
<div class="a" style="left:664.0px;top:580.0px;width:18.0px;height:17.5px;background:linear-gradient(#f4f8ff,#c8d8f0);border:1px solid #8aa8d8;border-radius:0 3px 3px 0"></div>
<svg style="left:667.0px;top:582.0px" width="13.0" height="14.0" viewBox="0 0 13 14"><circle cx="7.500" cy="5.500" r="3.500" fill="#e8f0fc" stroke="#3a62b8" stroke-width="1.400"/><path d="M5 8.500l-3 4" stroke="#3a62b8" stroke-width="2"/></svg>
<div class="a" style="left:702.0px;top:576.3px;width:98.0px;height:23.7px;background:linear-gradient(#3aa8f8 0,#1a94f0 10%,#1590ec 80%,#1078d0 100%);border-left:1px solid #1060b8"></div>
<div class="a" style="left:694.0px;top:581.8px;width:13.5px;height:13.5px;background:radial-gradient(circle at 40% 35%,#8ac4fa,#2a7ae0 70%);border-radius:50%;border:1px solid #d4e8fc"></div>
<svg style="left:696.0px;top:583.8px" width="10.0" height="10.0" viewBox="0 0 10 10"><path d="M6 2L3 5l3 3" stroke="#fff" stroke-width="1.600" fill="none"/></svg>
<svg style="left:708.5px;top:582.5px" width="12.0" height="12.0" viewBox="0 0 16 16"><path d="M3 9l7-3 4 4-7 4z" fill="#b8b8b8" stroke="#4a4a4a" stroke-width=".8"/><path d="M3 9v2l4 5v-2z" fill="#6a6a6a"/><path d="M2 2l7 1-2 2 3 3-2 2-3-3-2 2z" fill="#2aa83a" stroke="#0a6a1a" stroke-width=".6"/></svg>
<svg style="left:722.0px;top:582.2px" width="12.5" height="12.5" viewBox="0 0 16 16"><circle cx="9.500" cy="6" r="4.500" fill="#f4f8ff" stroke="#c8d8f0" stroke-width="1.400"/><path d="M6 9.500l-4.500 5" stroke="#e8eefa" stroke-width="2.400" stroke-linecap="round"/></svg>
<svg style="left:736.5px;top:582.5px" width="12.0" height="12.0" viewBox="0 0 16 16"><circle cx="8" cy="9" r="5.500" fill="#e8e428" stroke="#5aa82a" stroke-width="1.600"/><path d="M8 1v5M3 3l3 3M13 3l-3 3M2 9h12" stroke="#5aa82a" stroke-width="1.300"/></svg>
<svg style="left:750.0px;top:582.5px" width="12.0" height="12.0" viewBox="0 0 16 16"><path d="M1.500 1.500h4v5l4.500-5h4.500L8.500 8.500v6h-7z" fill="#e81818" stroke="#fff" stroke-width=".9"/><rect x="9" y="9" width="6" height="6" fill="#fff"/><rect x="10" y="10" width="3.500" height="3.500" fill="#111"/></svg>
<div class="t" style="left:18.0px;top:4.5px;font-size:10.2px;line-height:12px;letter-spacing:-0.00px;color:#fff;font-weight:bold;text-shadow:0.6px 0.8px 0 #0a2c8c;">Управление производственным предприятием, редакция 1.3 / МасальскаяМС /</div>
<div class="t" style="left:12.6px;top:25.1px;font-size:8.8px;line-height:11px;letter-spacing:0.34px;color:#2e281a;"><u>Ф</u>айл</div>
<div class="t" style="left:47.0px;top:25.1px;font-size:8.8px;line-height:11px;letter-spacing:0.05px;color:#2e281a;"><u>П</u>равка</div>
<div class="t" style="left:86.0px;top:25.1px;font-size:8.8px;line-height:11px;letter-spacing:-0.27px;color:#2e281a;">Операции</div>
<div class="t" style="left:132.0px;top:25.1px;font-size:8.8px;line-height:11px;letter-spacing:-0.15px;color:#2e281a;">Справочники</div>
<div class="t" style="left:191.0px;top:25.1px;font-size:8.8px;line-height:11px;letter-spacing:0.07px;color:#2e281a;">Документы</div>
<div class="t" style="left:243.7px;top:25.1px;font-size:8.8px;line-height:11px;letter-spacing:-0.19px;color:#2e281a;">Отчеты</div>
<div class="t" style="left:281.7px;top:25.1px;font-size:8.8px;line-height:11px;letter-spacing:-0.19px;color:#2e281a;"><u>С</u>ервис</div>
<div class="t" style="left:322.5px;top:25.1px;font-size:8.8px;line-height:11px;letter-spacing:0.01px;color:#2e281a;"><u>О</u>кна</div>
<div class="t" style="left:355.0px;top:25.1px;font-size:8.8px;line-height:11px;letter-spacing:-0.12px;color:#2e281a;">Справка</div>
<div class="t" style="left:10.0px;top:62.7px;font-size:8.8px;line-height:11px;letter-spacing:-0.19px;color:#2e281a;">Переключить интерфейс</div>
<div class="t" style="left:125.5px;top:62.7px;font-size:8.8px;line-height:11px;letter-spacing:-0.24px;color:#2e281a;">Мои задачи</div>
<div class="t" style="left:499.0px;top:42.6px;font-size:10.4px;line-height:12px;letter-spacing:-0.66px;color:#7a4426;font-weight:bold;">M</div>
<div class="t" style="left:514.0px;top:42.6px;font-size:10.4px;line-height:12px;letter-spacing:-0.87px;color:#7a4426;font-weight:bold;">M+</div>
<div class="t" style="left:532.0px;top:42.6px;font-size:10.4px;line-height:12px;letter-spacing:0.44px;color:#7a4426;font-weight:bold;">M-</div>
<div class="t" style="left:18.0px;top:81.3px;font-size:9.5px;line-height:12px;letter-spacing:-0.06px;color:#181818;font-weight:bold;">Контрагенты: Гефест ООО</div>
<div class="t" style="left:5.5px;top:99.5px;font-size:8.8px;line-height:11px;letter-spacing:-0.01px;color:#2e281a;">Действия</div>
<div class="t" style="left:118.0px;top:99.5px;font-size:8.8px;line-height:11px;letter-spacing:-0.12px;color:#2e281a;">Перейти</div>
<div class="t" style="left:182.5px;top:99.5px;font-size:8.8px;line-height:11px;letter-spacing:-0.15px;color:#2e281a;">Отчеты</div>
<div class="t" style="left:241.0px;top:99.5px;font-size:8.8px;line-height:11px;letter-spacing:0.21px;color:#2e281a;">Файлы</div>
<div class="t" style="left:301.5px;top:99.5px;font-size:8.8px;line-height:11px;letter-spacing:-0.13px;color:#2e281a;">Создать</div>
<div class="t" style="left:8.0px;top:123.5px;font-size:8.8px;line-height:11px;letter-spacing:-0.23px;color:#3a341e;">Наименование:</div>
<div class="t" style="left:78.0px;top:123.5px;font-size:8.8px;line-height:11px;letter-spacing:-0.36px;color:#111;">Гефест ООО</div>
<div class="t" style="left:704.0px;top:123.5px;font-size:8.8px;line-height:11px;letter-spacing:-0.35px;color:#3a341e;">Код:</div>
<div class="t" style="left:732.5px;top:123.5px;font-size:8.8px;line-height:11px;letter-spacing:-0.17px;color:#111;">000002720</div>
<div class="t" style="left:16.0px;top:145.2px;font-size:8.8px;line-height:11px;letter-spacing:-0.39px;color:#2e281a;">Общие</div>
<div class="t" style="left:63.5px;top:145.2px;font-size:8.8px;line-height:11px;letter-spacing:0.06px;color:#2e281a;">Контакты</div>
<div class="t" style="left:122.0px;top:145.2px;font-size:8.8px;line-height:11px;letter-spacing:-0.11px;color:#2e281a;">Счета и договоры</div>
<div class="t" style="left:212.5px;top:145.2px;font-size:8.8px;line-height:11px;letter-spacing:-0.19px;color:#2e281a;">События</div>
<div class="t" style="left:267.0px;top:145.2px;font-size:8.8px;line-height:11px;letter-spacing:-0.08px;color:#2e281a;">Свойства</div>
<div class="t" style="left:325.0px;top:145.2px;font-size:8.8px;line-height:11px;letter-spacing:0.08px;color:#2e281a;">Категории</div>
<div class="t" style="left:387.0px;top:145.2px;font-size:8.8px;line-height:11px;letter-spacing:-0.22px;color:#2e281a;">Прочее</div>
<div class="t" style="left:13.5px;top:162.1px;font-size:9.6px;line-height:12px;letter-spacing:-0.11px;color:#b07818;font-weight:bold;">Банковские счета:</div>
<div class="t" style="left:17.0px;top:179.0px;font-size:8.8px;line-height:11px;letter-spacing:0.06px;color:#2e281a;">Действия</div>
<div class="t" style="left:251.0px;top:179.0px;font-size:8.8px;line-height:11px;letter-spacing:-0.17px;color:#2e281a;">Основной</div>
<div class="t" style="left:42.0px;top:197.0px;font-size:8.8px;line-height:11px;letter-spacing:0.01px;color:#4a463a;">Код</div>
<div class="t" style="left:130.5px;top:197.0px;font-size:8.8px;line-height:11px;letter-spacing:-0.21px;color:#4a463a;">Наименование</div>
<div class="t" style="left:475.5px;top:197.0px;font-size:8.8px;line-height:11px;letter-spacing:-0.22px;color:#4a463a;">Банк</div>
<div class="t" style="left:42.5px;top:212.3px;font-size:9.6px;line-height:12px;letter-spacing:0.11px;color:#000;font-weight:bold;">000000539</div>
<div class="t" style="left:130.0px;top:212.3px;font-size:9.6px;line-height:12px;letter-spacing:-0.30px;color:#000;font-weight:bold;">Основной</div>
<div class="t" style="left:475.5px;top:212.3px;font-size:9.6px;line-height:12px;letter-spacing:0.05px;color:#000;font-weight:bold;">Ф-Л АБ&quot;ДЕВОН-КРЕДИТ&quot;(ОАО)</div>
<div class="t" style="left:14.0px;top:330.7px;font-size:9.6px;line-height:12px;letter-spacing:-0.10px;color:#b07818;font-weight:bold;">Договоры контрагентов:</div>
<div class="t" style="left:17.0px;top:347.7px;font-size:8.8px;line-height:11px;letter-spacing:0.06px;color:#2e281a;">Действия</div>
<div class="t" style="left:328.0px;top:347.7px;font-size:8.8px;line-height:11px;letter-spacing:-0.23px;color:#2e281a;">Основной</div>
<div class="t" style="left:48.0px;top:365.5px;font-size:8.8px;line-height:11px;letter-spacing:-0.32px;color:#4a463a;">Код</div>
<div class="t" style="left:89.0px;top:365.5px;font-size:8.8px;line-height:11px;letter-spacing:-0.25px;color:#4a463a;">Наименование</div>
<div class="t" style="left:263.0px;top:365.5px;font-size:8.8px;line-height:11px;letter-spacing:-0.28px;color:#4a463a;">Ведение ...</div>
<div class="t" style="left:312.0px;top:365.5px;font-size:8.8px;line-height:11px;letter-spacing:-0.24px;color:#4a463a;">Вид дого...</div>
<div class="t" style="left:361.0px;top:365.5px;font-size:8.8px;line-height:11px;letter-spacing:-0.02px;color:#4a463a;">Номер</div>
<div class="t" style="left:424.0px;top:365.5px;font-size:8.8px;line-height:11px;letter-spacing:0.13px;color:#4a463a;">Дата</div>
<div class="t" style="left:486.6px;top:365.5px;font-size:8.8px;line-height:11px;letter-spacing:-0.11px;color:#4a463a;">Организация</div>
<div class="t" style="left:563.6px;top:365.5px;font-size:8.8px;line-height:11px;letter-spacing:-0.12px;color:#4a463a;">Подразделения</div>
<div class="t" style="left:48.0px;top:381.5px;font-size:8.8px;line-height:11px;letter-spacing:-0.47px;color:#222;">00001...</div>
<div class="t" style="left:88.0px;top:381.5px;font-size:8.8px;line-height:11px;letter-spacing:-0.10px;color:#222;">Договор 10/06 от 27.06.06</div>
<div class="t" style="left:263.0px;top:381.5px;font-size:8.8px;line-height:11px;letter-spacing:-0.19px;color:#222;">По дого...</div>
<div class="t" style="left:312.0px;top:381.5px;font-size:8.8px;line-height:11px;letter-spacing:-0.22px;color:#222;">Прочее</div>
<div class="t" style="left:486.6px;top:381.5px;font-size:8.8px;line-height:11px;letter-spacing:0.10px;color:#222;">ОАО &quot;БАЗ&quot;</div>
<div class="t" style="left:48.0px;top:396.3px;font-size:9.6px;line-height:12px;letter-spacing:-0.19px;color:#000;font-weight:bold;">0000...</div>
<div class="t" style="left:88.0px;top:396.3px;font-size:9.6px;line-height:12px;letter-spacing:-0.30px;color:#000;font-weight:bold;">Основной договор</div>
<div class="t" style="left:263.0px;top:396.3px;font-size:9.6px;line-height:12px;letter-spacing:0.07px;color:#000;font-weight:bold;">По дог...</div>
<div class="t" style="left:312.0px;top:396.3px;font-size:9.6px;line-height:12px;letter-spacing:-0.27px;color:#000;font-weight:bold;">Прочее</div>
<div class="t" style="left:486.6px;top:396.3px;font-size:9.6px;line-height:12px;letter-spacing:-0.15px;color:#000;font-weight:bold;">ОАО &quot;БАЗ&quot;</div>
<div class="t" style="left:48.0px;top:411.9px;font-size:8.8px;line-height:11px;letter-spacing:-0.47px;color:#222;">00001...</div>
<div class="t" style="left:88.0px;top:411.9px;font-size:8.8px;line-height:11px;letter-spacing:-0.06px;color:#222;">Расчеты с поставщиками за материалы</div>
<div class="t" style="left:263.0px;top:411.9px;font-size:8.8px;line-height:11px;letter-spacing:-0.19px;color:#222;">По дого...</div>
<div class="t" style="left:312.0px;top:411.9px;font-size:8.8px;line-height:11px;letter-spacing:-0.22px;color:#222;">Прочее</div>
<div class="t" style="left:486.6px;top:411.9px;font-size:8.8px;line-height:11px;letter-spacing:0.10px;color:#222;">ОАО &quot;БАЗ&quot;</div>
<div class="t" style="left:8.0px;top:503.5px;font-size:8.8px;line-height:11px;letter-spacing:-0.15px;color:#3a341e;">Комментарий:</div>
<div class="t" style="left:687.6px;top:526.8px;font-size:9px;line-height:11px;letter-spacing:-0.55px;color:#222;font-weight:bold;">OK</div>
<div class="t" style="left:711.6px;top:526.9px;font-size:8.8px;line-height:11px;letter-spacing:-0.02px;color:#2e281a;">Записать</div>
<div class="t" style="left:760.6px;top:526.9px;font-size:8.8px;line-height:11px;letter-spacing:-0.07px;color:#2e281a;">Закрыть</div>
<div class="t" style="left:16.0px;top:546.5px;font-size:8.8px;line-height:11px;letter-spacing:-0.07px;color:#2e281a;">Контрагенты</div>
<div class="t" style="left:151.0px;top:546.5px;font-size:8.8px;line-height:11px;letter-spacing:-0.17px;color:#2e281a;">Контрагенты: Гефест ООО</div>
<div class="t" style="left:4.0px;top:563.5px;font-size:8.8px;line-height:11px;letter-spacing:-0.10px;color:#2e281a;">Для получения подсказки нажмите F1</div>
<div class="t" style="left:752.0px;top:563.5px;font-size:8.8px;line-height:11px;letter-spacing:-1.03px;color:#a09c88;">CAP</div>
<div class="t" style="left:777.0px;top:563.5px;font-size:8.8px;line-height:11px;letter-spacing:-1.02px;color:#333;">NUM</div>
<div class="t" style="left:27.0px;top:579.6px;font-size:14px;line-height:16px;letter-spacing:-0.81px;color:#fff;font-weight:bold;font-style:italic;text-shadow:1px 1px 1px #1a4a1a;">пуск</div>
<div class="t" style="left:420.0px;top:583.2px;font-size:8.8px;line-height:11px;letter-spacing:0.81px;color:#fff;">У...</div>
<div class="t" style="left:472.0px;top:583.2px;font-size:8.8px;line-height:11px;letter-spacing:0.08px;color:#fff;">E:\</div>
<div class="t" style="left:524.0px;top:583.2px;font-size:8.8px;line-height:11px;letter-spacing:0.07px;color:#fff;">Mi...</div>
<div class="t" style="left:562.6px;top:583.2px;font-size:8.8px;line-height:11px;letter-spacing:-0.93px;color:#fff;">RL</div>
<div class="t" style="left:582.0px;top:583.2px;font-size:8.8px;line-height:11px;letter-spacing:-0.37px;color:#9a9a9a;">Поиск на рабочем ст</div>
<div class="t" style="left:768.5px;top:583.2px;font-size:8.8px;line-height:11px;letter-spacing:-0.18px;color:#fff;">15:49</div>
</body>
</html>
